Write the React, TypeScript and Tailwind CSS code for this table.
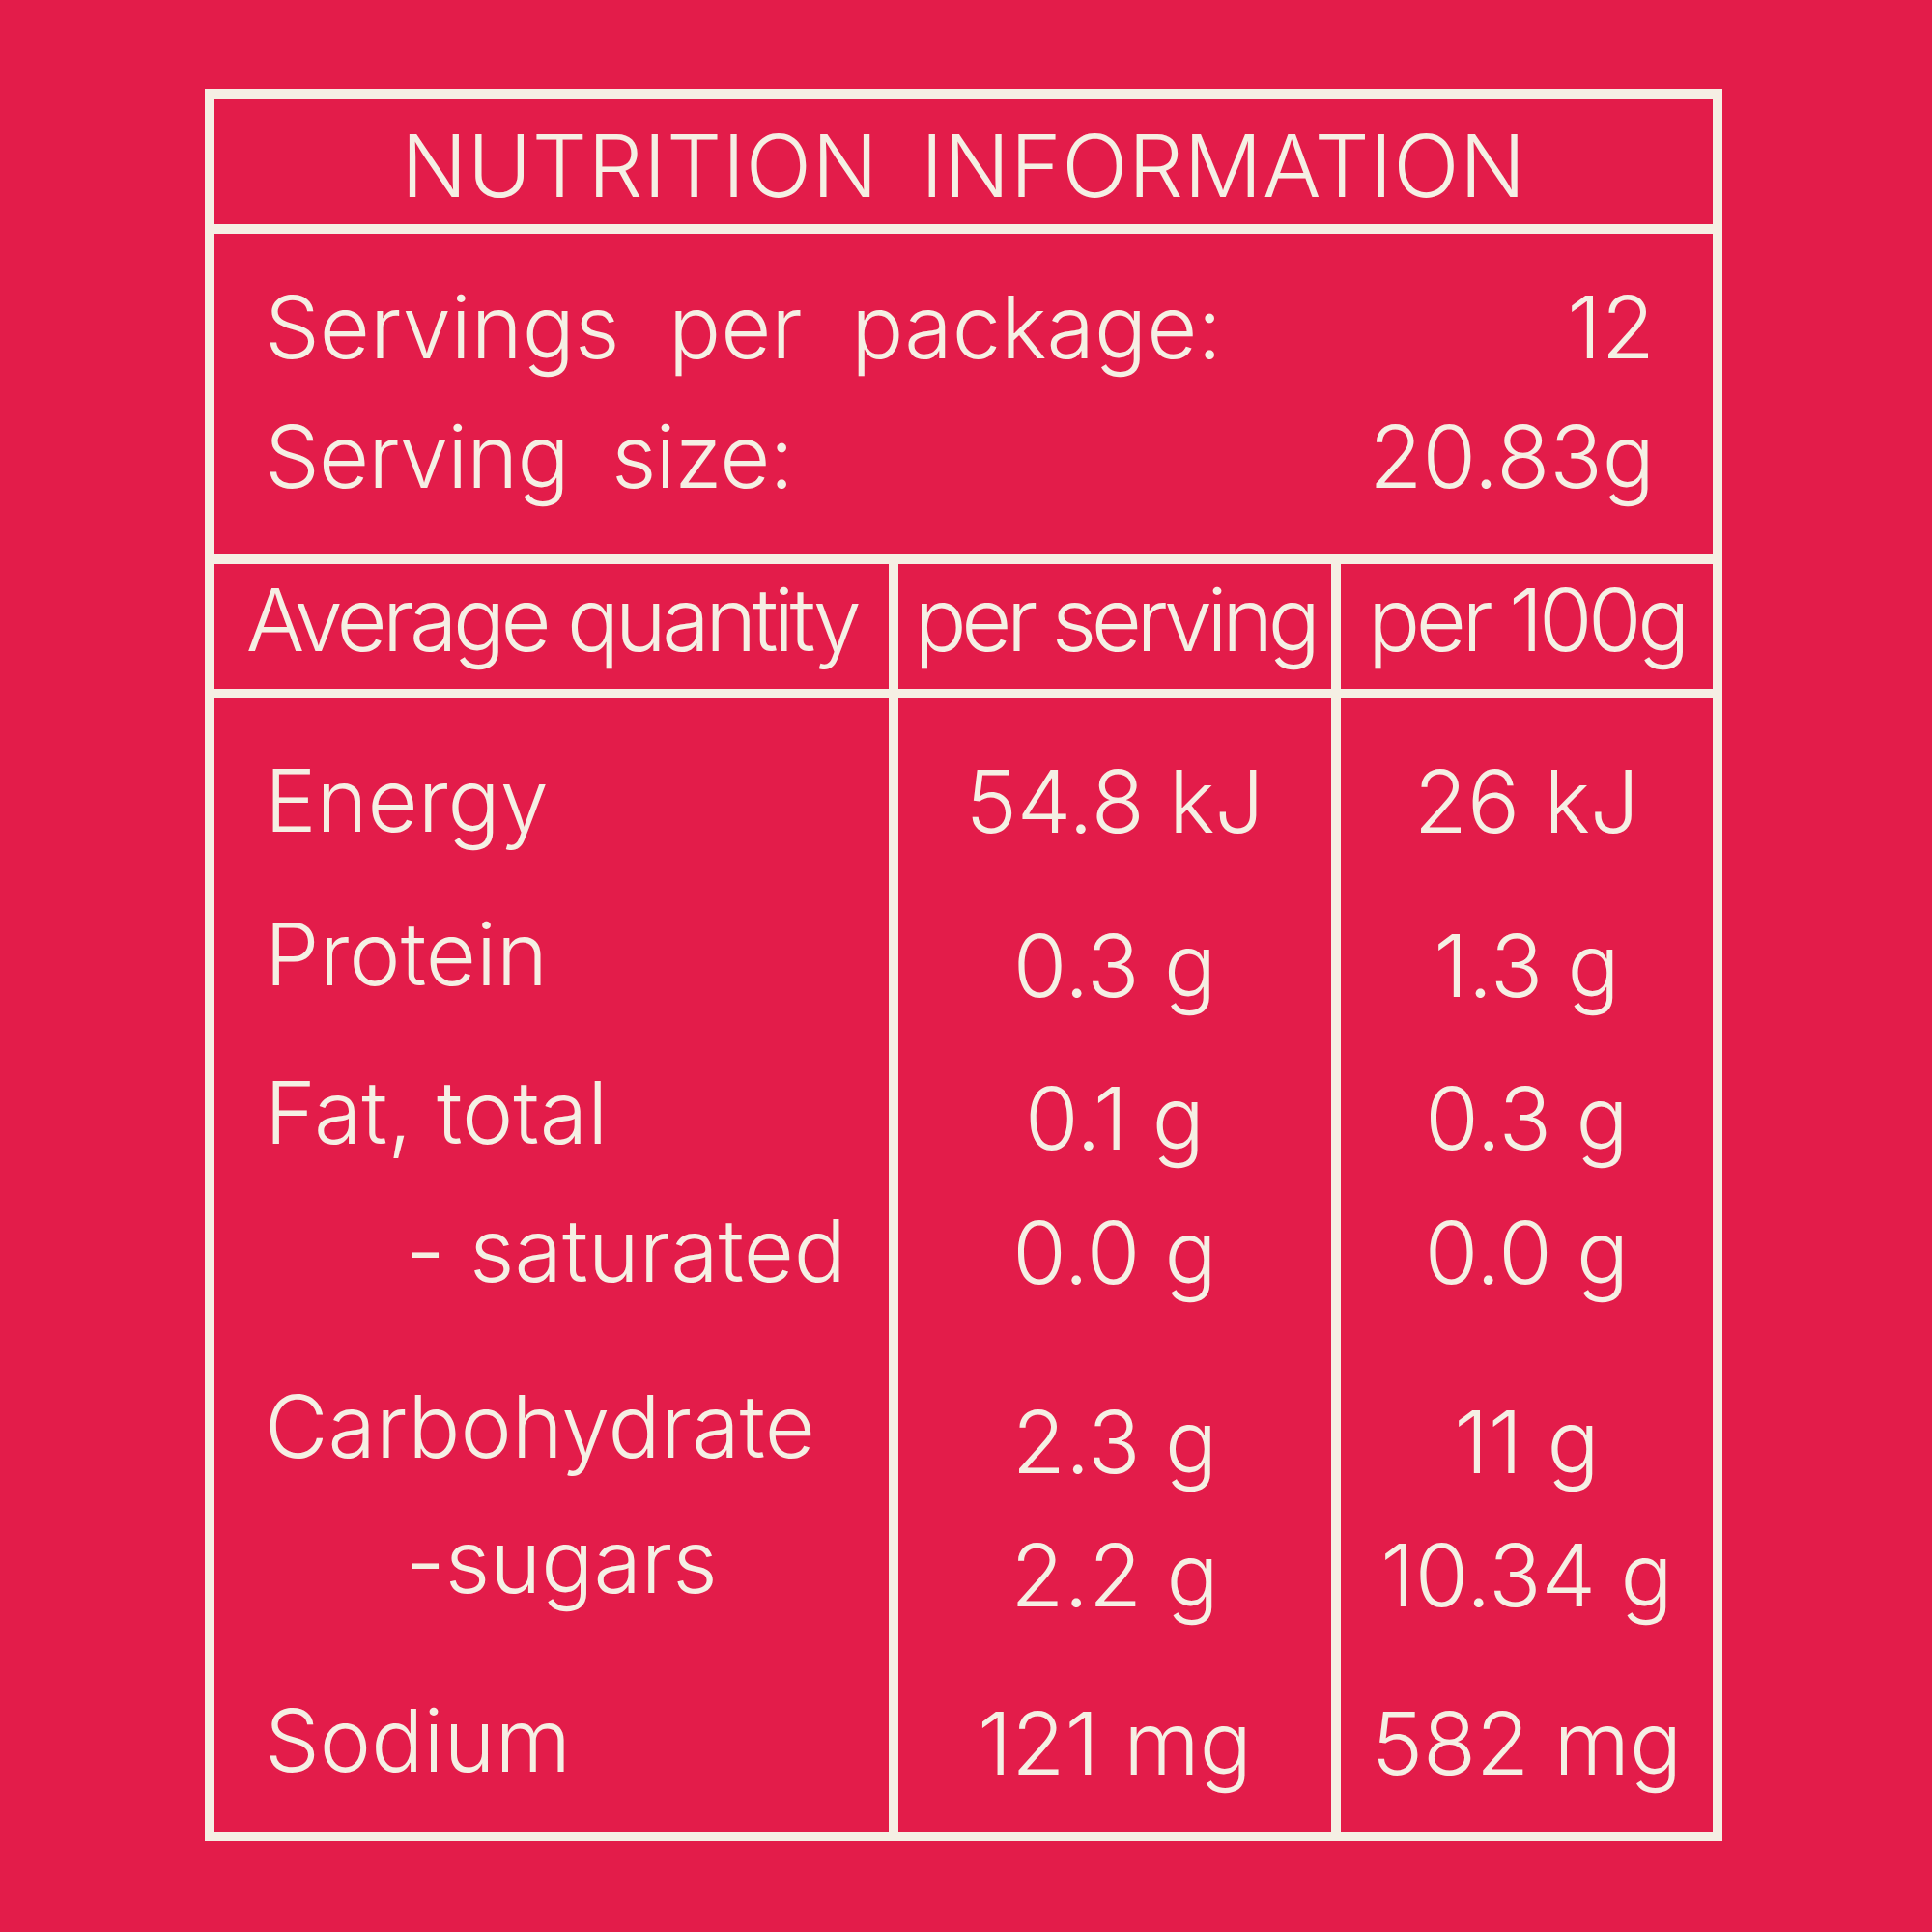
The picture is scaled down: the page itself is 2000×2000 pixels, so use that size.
const FONT = "font-['Inter','Noto_Sans',sans-serif]";

// label / value pairs for the body, heights tuned so rows sit where the label does
const ROWS = [
  { label: "Energy", indent: false, serving: "54.8 kJ", per100: "26 kJ", h: "h-[159px]", dv: "pt-[1px]" },
  { label: "Protein", indent: false, serving: "0.3 g", per100: "1.3 g", h: "h-[164px]", dv: "pt-[12px]" },
  { label: "Fat, total", indent: false, serving: "0.1 g", per100: "0.3 g", h: "h-[143px]", dv: "pt-[6px]" },
  { label: "- saturated", indent: true, serving: "0.0 g", per100: "0.0 g", h: "h-[182px]", dv: "pt-[2px]" },
  { label: "Carbohydrate", indent: false, serving: "2.3 g", per100: "11 g", h: "h-[140px]", dv: "pt-[16px]" },
  { label: "-sugars", indent: true, serving: "2.2 g", per100: "10.34 g", h: "h-[185px]", dv: "pt-[14px]" },
  { label: "Sodium", indent: false, serving: "121 mg", per100: "582 mg", h: "h-[90px]", dv: "pt-[3px]" },
];

export default function App() {
  return (
    <div className={`w-[2000px] h-[2000px] bg-[#e31c4a] text-[#f5efe4] font-light ${FONT}`}>
      <div className="pt-[92px] pl-[212px]">
        <div className="w-[1571px] h-[1814px] border-[10px] border-[#f5efe4] flex flex-col">
          {/* Title */}
          <div className="h-[140px] border-b-[10px] border-[#f5efe4] flex items-center justify-center pt-[9px]">
            <h1 className="text-[90px] leading-[90px] tracking-[0.005em] [word-spacing:0.2em]">NUTRITION INFORMATION</h1>
          </div>

          {/* Servings */}
          <div className="h-[342px] border-b-[10px] border-[#f5efe4] flex flex-col gap-[44px] pt-[52px] pl-[52px] pr-[60px] text-[90px] leading-[90px]">
            <div className="flex justify-between">
              <span className="[word-spacing:0.28em]">Servings per package:</span>
              <span>12</span>
            </div>
            <div className="flex justify-between">
              <span className="tracking-[-0.01em] [word-spacing:0.22em]">Serving size:</span>
              <span>20.83g</span>
            </div>
          </div>

          {/* Table */}
          <div className="flex-1 flex">
            <div className="w-[708px] border-r-[10px] border-[#f5efe4] flex flex-col">
              <div className="h-[139px] border-b-[10px] border-[#f5efe4] flex items-center justify-center pb-[13px] text-[90px] leading-[90px] tracking-[-0.05em]">
                Average quantity
              </div>
              <div className="flex flex-col pt-[61px] pl-[52px] text-[90px] leading-[90px]">
                {ROWS.map((r) => (
                  <div key={r.label} className={r.h}>
                    <span className={r.indent ? "pl-[146px]" : ""}>{r.label}</span>
                  </div>
                ))}
              </div>
            </div>

            <div className="w-[458px] border-r-[10px] border-[#f5efe4] flex flex-col">
              <div className="h-[139px] border-b-[10px] border-[#f5efe4] flex items-center justify-center pb-[13px] text-[90px] leading-[90px] tracking-[-0.06em]">
                per serving
              </div>
              <div className="flex flex-col pt-[61px] text-[90px] leading-[90px]">
                {ROWS.map((r) => (
                  <div key={r.label} className={`${r.h} ${r.dv} text-center`}>
                    {r.serving}
                  </div>
                ))}
              </div>
            </div>

            <div className="flex-1 flex flex-col">
              <div className="h-[139px] border-b-[10px] border-[#f5efe4] flex items-center justify-center pb-[13px] text-[90px] leading-[90px] tracking-[-0.05em]">
                per 100g
              </div>
              <div className="flex flex-col pt-[61px] text-[90px] leading-[90px]">
                {ROWS.map((r) => (
                  <div key={r.label} className={`${r.h} ${r.dv} text-center`}>
                    {r.per100}
                  </div>
                ))}
              </div>
            </div>
          </div>
        </div>
      </div>
    </div>
  );
}
